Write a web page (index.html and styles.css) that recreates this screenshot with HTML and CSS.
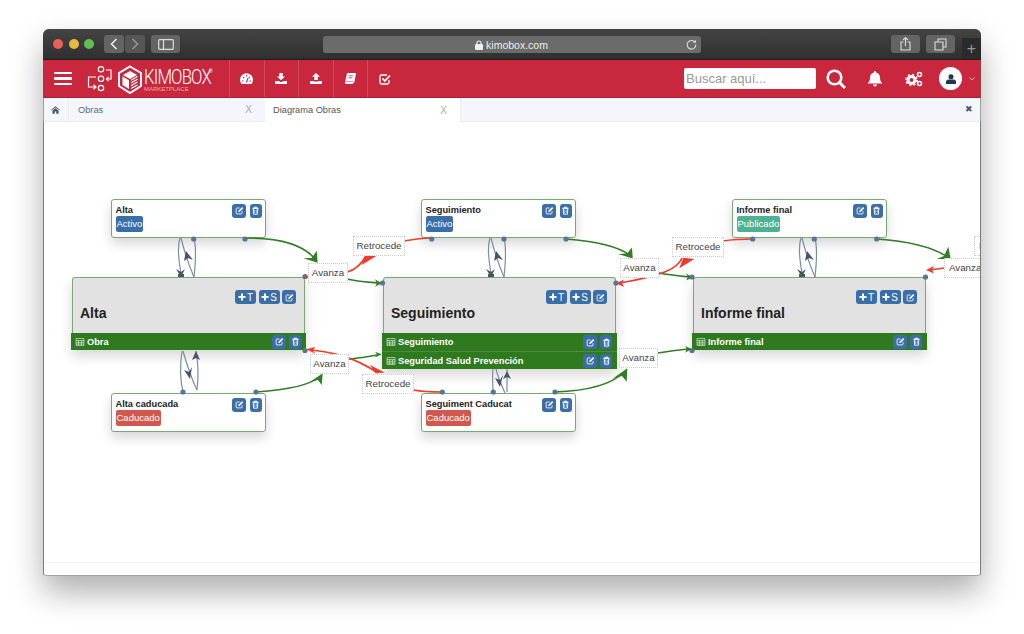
FILE: index.html
```html
<!DOCTYPE html>
<html lang="en">
<head>
<meta charset="UTF-8" />
<meta name="viewport" content="width=device-width, initial-scale=1" />
<title>Diagrama Obras</title>
<link rel="stylesheet" href="styles.css">
</head>
<body>
  <svg class="defs" width="0" height="0">
    <symbol id="i-edit" viewBox="0 0 16 16">
      <path d="M12.5 9v3.5a1.5 1.5 0 0 1-1.5 1.5H3.5A1.5 1.5 0 0 1 2 12.5V5a1.5 1.5 0 0 1 1.5-1.5H8" fill="none" stroke="currentColor" stroke-width="1.5"/>
      <path d="M6 8.5 12.7 1.8l2 2L8 10.5H6z" fill="currentColor"/>
    </symbol>
    <symbol id="i-trash" viewBox="0 0 16 16">
      <path d="M2.5 4h11M6 4V2h4v2M4 4l.5 10.5h7L12 4z" fill="none" stroke="currentColor" stroke-width="1.6"/>
      <path d="M6.5 6.500v6M9.500 6.500v6" stroke="currentColor"/>
    </symbol>
    <symbol id="i-plus" viewBox="0 0 16 16">
      <path d="M6 1h4v5h5v4h-5v5H6v-5H1V6h5z" fill="currentColor"/>
    </symbol>
    <symbol id="i-table" viewBox="0 0 16 14">
      <path d="M1 1h14v12H1zM1 4.500h14M1 7.500h14M1 10.500h14M5.500 4.500V13M10.500 4.500V13" fill="none" stroke="currentColor" stroke-width="1.200"/>
    </symbol>
    <g id="loop-a" fill="none" stroke="#7d8ca3" stroke-width="1.200">
      <path d="M180 238C176 250 180 265 181 274"/>
      <path d="M181 238C184 250 190 268 194 277"/>
      <path d="M194 238C197 250 195 268 194 277"/>
    </g>
    <g id="loop-heads" fill="#45546b">
      <path d="M181 277 176 269 181 272 185 269z"/>
      <path d="M186 251 193 260 188 258 184 261z"/>
      <rect x="178" y="274" width="6" height="3"/>
    </g>
  </svg>

  <div class="window">
    <div class="titlebar">
      <div class="lights"><i class="red"></i><i class="amber"></i><i class="green"></i></div>
      <div class="pager">
        <span class="tool"><svg width="8" height="12" viewBox="0 0 8 12"><path d="M6.500 1 1.500 6l5 5" fill="none" stroke="#eee" stroke-width="1.500"/></svg></span>
        <span class="tool dim"><svg width="8" height="12" viewBox="0 0 8 12"><path d="M1.500 1l5 5-5 5" fill="none" stroke="#999" stroke-width="1.500"/></svg></span>
      </div>
      <span class="tool wide side"><svg width="16" height="11" viewBox="0 0 16 11"><rect x=".7" y=".7" width="14.600" height="9.600" rx="1" fill="none" stroke="#ddd" stroke-width="1.200"/><path d="M5.500 1v9" stroke="#ddd" stroke-width="1.200"/></svg></span>
      <div class="urlbar">
        <span class="url"><svg width="8" height="10" viewBox="0 0 8 10"><rect y="4" width="8" height="6" rx="1" fill="#eee"/><path d="M2 4.500V3a2 2 0 0 1 4 0v1.500" fill="none" stroke="#eee" stroke-width="1.200"/></svg>kimobox.com</span>
        <svg class="reload" width="11" height="11" viewBox="0 0 12 12"><path d="M9.800 3.500A4.700 4.700 0 1 0 10.700 6" fill="none" stroke="#ddd" stroke-width="1.200"/><path d="M7.500 3.800 11 4.200 10.500.8z" fill="#ddd"/></svg>
      </div>
      <span class="tool wide"><svg width="11" height="14" viewBox="0 0 11 14"><path d="M3.500 5H1v8h9V5H7.500M5.500 9V1M3 3l2.500-2.300L8 3" fill="none" stroke="#ddd" stroke-width="1.100"/></svg></span>
      <span class="tool wide"><svg width="13" height="13" viewBox="0 0 13 13"><path d="M4 4V1h8v8H9M1 4h8v8H1z" fill="none" stroke="#ddd" stroke-width="1.100"/></svg></span>
      <span class="newtab">+</span>
    </div>

    <nav class="topnav">
      <div class="burger"><i></i><i></i><i></i></div>
      <div class="logo">
        <svg width="58" height="32" viewBox="0 0 58 32">
          <g fill="none" stroke="#fff" stroke-width="1.200">
            <circle cx="16" cy="5.300" r="2.700"/><circle cx="16" cy="14.800" r="2.700"/><circle cx="16" cy="24" r="2.700"/>
            <path d="M21 6h5v9h-4M23.500 12.800 21.500 15l2 2.200"/>
            <path d="M11 13H3.500v10H11M8.500 20.800 11 23l-2.500 2.200"/>
          </g>
          <path d="M45 2.500 56 9v13l-11 7-11-7V9z" fill="none" stroke="#fff" stroke-width="2"/>
          <path d="M45 7l7 4-7 4-7-4z" fill="#fff"/>
          <path d="M37.500 12.500 44 16.200V25l-6.500-4z" fill="#fff"/>
          <path d="M46 16.200l6.500-3.700M46 19l6.500-3.700M46 21.800l6.500-3.700M46 24.600l6.500-3.700" stroke="#fff" stroke-width="1.100"/>
        </svg>
        <div class="brand">
          <span class="brand-name">KIMOBOX</span><sup class="brand-reg">®</sup>
          <span class="brand-sub">MARKETPLACE</span>
        </div>
      </div>
      <ul class="shortcuts">
        <li><svg width="13" height="11" viewBox="0 0 13 11"><path d="M1.500 11A6.500 6.500 0 1 1 11.500 11z" fill="#fff"/><path d="M6.500 9.500 8 5M2 8h1.500M9.500 8H11M6.500 2v1.500M3.200 4l1 1M9.800 4l-1 1" stroke="#c8273d" stroke-width="1.100"/></svg></li>
        <li><svg width="12" height="11" viewBox="0 0 12 11"><path d="M4.300 0h3.400v3.500H10L6 7.300 2 3.500h2.300zM0 8h3.500L6 9.300 8.500 8H12v3H0z" fill="#fff"/></svg></li>
        <li><svg width="12" height="11" viewBox="0 0 12 11"><path d="M6 0l4 3.800H7.700V7H4.300V3.800H2zM0 8h3.500v.5h5V8H12v3H0z" fill="#fff"/></svg></li>
        <li><svg width="12" height="11" viewBox="0 0 12 11"><path d="M3 .5h8.500L9.800 9.500H1.200L1.500 10.500H9" fill="none" stroke="#fff"/><path d="M3 .5h8.500L9.800 8.500H1.200z" fill="#fff"/><path d="M4.800 2.800h4M4.400 4.800h4" stroke="#c8273d" stroke-width=".8"/></svg></li>
        <li><svg width="12" height="12" viewBox="0 0 12 12"><path d="M10 7v2.500A1.500 1.500 0 0 1 8.500 11h-6A1.500 1.500 0 0 1 1 9.500v-6A1.500 1.500 0 0 1 2.500 2H8" fill="none" stroke="#fff" stroke-width="1.300"/><path d="M3.500 5.500 5.800 8l5.200-5.500" fill="none" stroke="#fff" stroke-width="1.800"/></svg></li>
      </ul>
      <div class="nav-right">
        <input class="search" type="text" placeholder="Buscar aquí...">
        <svg class="search-icon" width="20" height="20" viewBox="0 0 20 20"><circle cx="8.500" cy="8.500" r="6.800" fill="none" stroke="#fff" stroke-width="2.600"/><path d="M13.500 13.500 19 19" stroke="#fff" stroke-width="3"/></svg>
        <svg class="bell" width="16" height="16" viewBox="0 0 16 16"><path d="M8 0a1.300 1.300 0 0 1 1.200 1.500C11.500 2 13 4 13 6.500c0 3 .8 4.500 2.500 6H.5C2.200 11 3 9.500 3 6.500 3 4 4.500 2 6.800 1.500A1.300 1.300 0 0 1 8 0zM6 13.500h4a2 2 0 0 1-4 0z" fill="#fff"/></svg>
        <svg class="cogs" width="18" height="16" viewBox="0 0 18 16"><circle cx="6.500" cy="9" r="3.500" fill="none" stroke="#fff" stroke-width="3"/><circle cx="6.500" cy="9" r="5.600" fill="none" stroke="#fff" stroke-width="1.500" stroke-dasharray="2 2.400"/><circle cx="14.500" cy="3.500" r="2" fill="none" stroke="#fff" stroke-width="1.500"/><circle cx="14.500" cy="12.500" r="2" fill="none" stroke="#fff" stroke-width="1.500"/></svg>
        <span class="avatar"><svg width="10" height="10" viewBox="0 0 10 10"><circle cx="5" cy="2.700" r="2.500" fill="#1f3555"/><path d="M0 10V8a2.500 2.500 0 0 1 2.500-2.500h5A2.500 2.500 0 0 1 10 8v2z" fill="#1f3555"/></svg></span>
        <svg class="caret" width="6" height="4" viewBox="0 0 6 4"><path d="M.5.500 3 3 5.500.5" fill="none" stroke="#eebcc3"/></svg>
      </div>
    </nav>

    <div class="tabs">
      <span class="tab-home"><svg width="9" height="8" viewBox="0 0 12 10"><path d="M6 0l6 5-.8.8L6 1.500.8 5.800 0 5zM2 6l4-3.300L10 6v4H7V7H5v3H2z" fill="#44566f"/></svg></span>
      <span class="tab"><span>Obras</span><b>X</b></span>
      <span class="tab active"><span>Diagrama Obras</span><b>X</b></span>
      <span class="tab-close">✖</span>
    </div>

    <main class="canvas">
      <div class="node small n1">
        <div class="small-body"><strong>Alta</strong><span class="badge blue">Activo</span></div>
        <div class="btns top">
          <span class="btn"><svg><use href="#i-edit"/></svg></span><span class="btn thin"><svg><use href="#i-trash"/></svg></span>
        </div>
      </div>
      <div class="node small n2">
        <div class="small-body"><strong>Seguimiento</strong><span class="badge blue">Activo</span></div>
        <div class="btns top">
          <span class="btn"><svg><use href="#i-edit"/></svg></span><span class="btn thin"><svg><use href="#i-trash"/></svg></span>
        </div>
      </div>
      <div class="node small n3">
        <div class="small-body"><strong>Informe final</strong><span class="badge teal">Publicado</span></div>
        <div class="btns top">
          <span class="btn"><svg><use href="#i-edit"/></svg></span><span class="btn thin"><svg><use href="#i-trash"/></svg></span>
        </div>
      </div>
      <div class="node small n4">
        <div class="small-body"><strong>Alta caducada</strong><span class="badge red">Caducado</span></div>
        <div class="btns top">
          <span class="btn"><svg><use href="#i-edit"/></svg></span><span class="btn thin"><svg><use href="#i-trash"/></svg></span>
        </div>
      </div>
      <div class="node small n5">
        <div class="small-body"><strong>Seguiment Caducat</strong><span class="badge red">Caducado</span></div>
        <div class="btns top">
          <span class="btn"><svg><use href="#i-edit"/></svg></span><span class="btn thin"><svg><use href="#i-trash"/></svg></span>
        </div>
      </div>

      <div class="node big b1">
        <div class="big-head">
          <div class="btns head-btns">
            <span class="btn txt"><svg><use href="#i-plus"/></svg>T</span><span class="btn txt"><svg><use href="#i-plus"/></svg>S</span><span class="btn"><svg><use href="#i-edit"/></svg></span>
          </div>
          <h2>Alta</h2>
        </div>
        <div class="row solo"><svg class="tbl"><use href="#i-table"/></svg><span>Obra</span><span class="btns"><span class="btn"><svg><use href="#i-edit"/></svg></span><span class="btn thin"><svg><use href="#i-trash"/></svg></span></span></div>
      </div>
      <div class="node big b2">
        <div class="big-head">
          <div class="btns head-btns">
            <span class="btn txt"><svg><use href="#i-plus"/></svg>T</span><span class="btn txt"><svg><use href="#i-plus"/></svg>S</span><span class="btn"><svg><use href="#i-edit"/></svg></span>
          </div>
          <h2>Seguimiento</h2>
        </div>
        <div class="row"><svg class="tbl"><use href="#i-table"/></svg><span>Seguimiento</span><span class="btns"><span class="btn"><svg><use href="#i-edit"/></svg></span><span class="btn thin"><svg><use href="#i-trash"/></svg></span></span></div>
        <div class="row"><svg class="tbl"><use href="#i-table"/></svg><span>Seguridad Salud Prevención</span><span class="btns"><span class="btn"><svg><use href="#i-edit"/></svg></span><span class="btn thin"><svg><use href="#i-trash"/></svg></span></span></div>
      </div>
      <div class="node big b3">
        <div class="big-head">
          <div class="btns head-btns">
            <span class="btn txt"><svg><use href="#i-plus"/></svg>T</span><span class="btn txt"><svg><use href="#i-plus"/></svg>S</span><span class="btn"><svg><use href="#i-edit"/></svg></span>
          </div>
          <h2>Informe final</h2>
        </div>
        <div class="row solo"><svg class="tbl"><use href="#i-table"/></svg><span>Informe final</span><span class="btns"><span class="btn"><svg><use href="#i-edit"/></svg></span><span class="btn thin"><svg><use href="#i-trash"/></svg></span></span></div>
      </div>

      <!-- edges, viewBox is in page coordinates -->
      <svg class="edges" width="938" height="454" viewBox="43 122 938 454">
        <use href="#loop-a"/><use href="#loop-heads"/>
        <use href="#loop-a" x="310"/><use href="#loop-heads" x="310"/>
        <use href="#loop-a" x="621"/><use href="#loop-heads" x="621"/>

        <g fill="none" stroke="#7d8ca3" stroke-width="1.200">
          <path d="M182 351C180 365 180 380 183 392"/>
          <path d="M183 351C187 365 192 380 197 390"/>
          <path d="M196 351C199 368 198 382 197 390"/>
          <path d="M493 369C492 378 493 385 493 392M496 369C498 378 502 386 505 393M507 369V392"/>
        </g>
        <g fill="#45546b">
          <path d="M196 351 200 360 196 358 192 360z"/>
          <path d="M190 379 184 370 189 372 192 367z"/>
          <path d="M500 387 495 378 500 380 503 375z"/>
          <path d="M507 371 511 379 507 377 503 379z"/>
        </g>

        <g fill="none" stroke="#2f7d25" stroke-width="1.600">
          <path d="M245 238C280 238 303 245 314 258"/>
          <path d="M347 279C360 282 368 282 378 283"/>
          <path d="M256 392C285 390 310 385 319 377"/>
          <path d="M349 359C360 358 370 356 378 355"/>
          <path d="M566 239C595 241 620 247 629 255"/>
          <path d="M659 273C670 275 680 276 689 277"/>
          <path d="M555 392C585 391 610 386 624 372"/>
          <path d="M658 353C670 351 678 350 688 349"/>
          <path d="M877 239C905 241 930 246 946 256"/>
        </g>
        <g fill="#2f7d25">
          <path d="M317.700 262.700 303.300 258.300 311.700 258 316.700 250.700z"/>
          <path d="M381.700 283.300 375 279.300 377 283.300 375 286.700z"/>
          <path d="M322.700 373.300 310 382 318 380 321.700 385z"/>
          <path d="M381.700 354.300 375 351.700 377 354.300 375 357.500z"/>
          <path d="M632.700 258.500 618 254 627 253.500 632 247.500z"/>
          <path d="M692.700 277.300 686 273.500 688 277 686 280.500z"/>
          <path d="M627.300 368.300 613.300 378.300 622 376 626.700 381.700z"/>
          <path d="M691.700 349 685 346 687 349 685 352.700z"/>
          <path d="M950.700 259 936.700 259 944 256 948.300 246.700z"/>
        </g>

        <g fill="none" stroke="#ee3b2b" stroke-width="1.600">
          <path d="M347 272C356 270 362 263 366 256"/>
          <path d="M404 241C415 239 423 238 432 238"/>
          <path d="M310 350C335 352 355 358 378 373"/>
          <path d="M413 390C425 392 433 392 442 392"/>
          <path d="M682 258C678 268 665 275 620 283"/>
          <path d="M723 241C735 239 743 239 753 239"/>
          <path d="M944 268C938 269 935 269 930 270"/>
        </g>
        <g fill="#ee3b2b">
          <path d="M361.700 265 365 256 376.700 255.700z"/>
          <path d="M370 365 375 373 385 372.700z"/>
          <path d="M679.300 268.300 683.300 257.700 694.300 259z"/>
          <path d="M306 349.300 315 347 313 351 316 354z"/>
          <path d="M616 283.300 624 279.500 622 283 624 287z"/>
          <path d="M926 270 934 266 932 270 934 273.500z"/>
        </g>

        <g fill="#567691">
          <circle cx="193.700" cy="239" r="2.600"/><circle cx="245" cy="239" r="2.600"/>
          <circle cx="431.700" cy="239" r="2.600"/><circle cx="504" cy="239" r="2.600"/><circle cx="566" cy="239" r="2.600"/>
          <circle cx="752.700" cy="239" r="2.600"/><circle cx="814.300" cy="239" r="2.600"/><circle cx="876.700" cy="239" r="2.600"/>
          <circle cx="183" cy="392" r="2.600"/><circle cx="256" cy="392" r="2.600"/>
          <circle cx="442.300" cy="392" r="2.600"/><circle cx="493.300" cy="392" r="2.600"/><circle cx="555" cy="392" r="2.600"/>
          <circle cx="305" cy="276.500" r="2.600"/><circle cx="305" cy="350.500" r="2.600"/>
          <circle cx="382.500" cy="283" r="2.600"/><circle cx="616" cy="283" r="2.600"/>
          <circle cx="692" cy="277" r="2.600"/><circle cx="925.500" cy="277" r="2.600"/><circle cx="692" cy="350.500" r="2.600"/>
        </g>
        <circle cx="306.500" cy="277" r="1.500" fill="#ee3b2b"/>
      </svg>

      <span class="edge-label l1">Avanza</span>
      <span class="edge-label l2">Avanza</span>
      <span class="edge-label l3">Avanza</span>
      <span class="edge-label l4">Avanza</span>
      <span class="edge-label l5">Avanza</span>
      <span class="edge-label l6">Retrocede</span>
      <span class="edge-label l7">Retrocede</span>
      <span class="edge-label l8">Retrocede</span>
      <span class="edge-label l9">Retrocede</span>

      <div class="foot"></div>
    </main>
  </div>
</body>
</html>
```

FILE: styles.css
```css
/* Reset & base */
* {
  box-sizing: border-box;
}
html, body {
  height: 100%;
}
body {
  margin: 0;
  background: #fff;
  overflow: hidden;
  font-family: 'Liberation Sans', Arial, sans-serif;
  color: #222;
}
.defs {
  display: block;
  height: 0;
}

.window {
  display: flex;
  flex-direction: column;
  width: 938px;
  height: 547px;
  margin: 29px 0 0 43px;
  border-radius: 6px 6px 3px 3px;
  overflow: hidden;
  background: #fff;
  outline: 1px solid rgba(90, 90, 90, 0.55);
  outline-offset: -1px;
  box-shadow: 0 16px 32px rgba(0, 0, 0, 0.32);
}

/* Browser chrome */
.titlebar {
  display: flex;
  align-items: flex-start;
  height: 31px;
  padding-top: 6px;
  background: linear-gradient(#444, #2f2f2f);
  border-bottom: 1px solid #1f1f1f;
  flex: none;
  position: relative;
}
.lights {
  display: flex;
  gap: 5.500px;
  margin: 4px 0 0 10px;
}
.lights i {
  width: 10px;
  height: 10px;
  border-radius: 50%;
}
.lights .red { background: #ec5f57; }
.lights .amber { background: #e2b93f; }
.lights .green { background: #5fc04f; }
.tool {
  display: flex;
  align-items: center;
  justify-content: center;
  width: 20px;
  height: 18px;
  background: #646464;
  border-radius: 3px;
}
.tool.dim {
  background: #565656;
}
.tool.wide {
  width: 29px;
  margin-right: 6.500px;
}
.pager {
  display: flex;
  gap: 1px;
  margin-left: 10px;
}
.side {
  margin-left: 6px;
}
.urlbar {
  position: relative;
  display: flex;
  align-items: center;
  justify-content: center;
  width: 378px;
  height: 17px;
  margin: 1px 190px 0 136px;
  background: #6b6b6b;
  border-radius: 3px;
  font-size: 10.500px;
  color: #eee;
}
.url {
  display: flex;
  align-items: center;
  gap: 3px;
}
.reload {
  position: absolute;
  right: 4px;
  top: 3px;
}
.newtab {
  position: absolute;
  right: 0;
  bottom: 0;
  width: 19px;
  height: 21px;
  background: #2b2b2b;
  color: #999;
  font-size: 16px;
  line-height: 21px;
  text-align: center;
}

/* Red app bar */
.topnav {
  display: flex;
  align-items: center;
  height: 38px;
  flex: none;
  padding-left: 11px;
  background: #c8273d;
  border-bottom: 1px solid #a91f33;
}
.burger {
  display: flex;
  flex-direction: column;
  gap: 3px;
  width: 18px;
}
.burger i {
  height: 2.600px;
  background: #fff;
  border-radius: 1px;
}
.logo {
  display: flex;
  align-items: center;
  width: 144px;
  margin-left: 13px;
  padding-top: 2px;
}
.brand {
  position: relative;
  display: flex;
  flex-direction: column;
  width: 70px;
  margin-left: 1px;
  color: #fff;
}
.brand-name {
  font-family: Roboto, sans-serif;
  font-weight: 300;
  font-size: 20px;
  line-height: 18px;
  letter-spacing: -1px;
  white-space: nowrap;
  transform: scaleX(0.84);
  transform-origin: left;
}
.brand-reg {
  position: absolute;
  left: 65px;
  top: 0;
  font-size: 5px;
  line-height: 6px;
}
.brand-sub {
  font-size: 6px;
  line-height: 6px;
  white-space: nowrap;
  color: #eaa8b2;
}
.shortcuts {
  display: flex;
  height: 100%;
  margin: 0;
  padding: 0;
  list-style: none;
}
.shortcuts li {
  display: flex;
  align-items: center;
  justify-content: center;
  width: 34.500px;
  border-left: 1px solid #d2495c;
}
.nav-right {
  display: flex;
  align-items: center;
  margin-left: auto;
  padding-right: 6px;
}
.search {
  width: 132px;
  height: 21px;
  padding: 0 2px;
  border: 0;
  border-radius: 2px;
  font: 13px 'Liberation Sans', Arial, sans-serif;
}
.search::placeholder {
  color: #999;
}
.search-icon { margin-left: 10px; }
.bell { margin-left: 21px; }
.cogs { margin-left: 22px; }
.avatar {
  display: flex;
  align-items: center;
  justify-content: center;
  width: 23px;
  height: 23px;
  margin-left: 16px;
  border-radius: 50%;
  background: #fff;
}
.caret { margin-left: 7px; }

/* Tabs */
.tabs {
  display: flex;
  height: 24px;
  flex: none;
  background: #f4f6fb;
  border-bottom: 1px solid #e9ebf0;
  font-size: 9.250px;
  color: #5b6b80;
}
.tab-home {
  display: flex;
  align-items: center;
  justify-content: center;
  width: 26px;
  border-right: 1px solid #e9ebf0;
}
.tab {
  display: flex;
  align-items: center;
  justify-content: space-between;
  width: 196px;
  padding: 0 13px 0 9px;
}
.tab b {
  font-weight: 400;
  color: #aaa;
  font-size: 10px;
}
.tab.active {
  height: 24px;
  padding-left: 8px;
  background: #fff;
  border-right: 1px solid #e9ebf0;
  color: #555;
}
.tab-close {
  margin-left: auto;
  padding-right: 8px;
  line-height: 23px;
  font-size: 9px;
  color: #44566f;
}

/* Diagram canvas */
.canvas {
  position: relative;
  flex: 1;
  overflow: hidden;
  border: solid rgba(90, 90, 90, 0.55);
  border-width: 0 1px;
}
.edges {
  position: absolute;
  left: -1px;
  top: 0;
}
.foot {
  position: absolute;
  left: 0;
  right: 0;
  top: 440px;
  border-top: 1px solid #f3f3f3;
}

.node {
  position: absolute;
  box-shadow: 0 6px 12px rgba(0, 0, 0, 0.16);
}
.small {
  display: flex;
  justify-content: space-between;
  width: 155px;
  height: 39px;
  padding: 3.500px 3.500px 0 3.500px;
  background: #fff;
  border: 1.500px solid #7aa874;
  border-radius: 3px;
}
.small-body {
  display: flex;
  flex-direction: column;
  align-items: flex-start;
}
.small-body strong {
  font-size: 9.250px;
  line-height: 12px;
}
.n1 { left: 67px; top: 77px; }
.n2 { left: 377px; top: 77px; }
.n3 { left: 688px; top: 77px; }
.n4 { left: 67px; top: 271px; }
.n5 { left: 377px; top: 271px; }

.badge {
  padding: 0 1px;
  height: 16px;
  border-radius: 2px;
  font-size: 9.500px;
  line-height: 15px;
  color: #fff;
}
.badge.blue { background: #3a6ea8; }
.badge.red { background: #d2574f; }
.badge.teal { background: #4fb194; }

.btns {
  display: flex;
  gap: 3.500px;
  flex: none;
}
.btn {
  display: flex;
  align-items: center;
  justify-content: center;
  width: 14px;
  height: 14px;
  background: #3a6ea8;
  border-radius: 3px;
  color: #fff;
  font-size: 10px;
}
.btn.thin {
  width: 12px;
}
.btn svg {
  width: 9px;
  height: 9px;
}
.btn.txt {
  width: 21px;
  gap: 1px;
}
.btn.txt svg {
  width: 8px;
  height: 8px;
}

.big {
  width: 233px;
}
.big-head {
  height: 56px;
  padding: 12px 8px 0 7px;
  background: #e2e2e2;
  border: 1.500px solid #7aa874;
  border-bottom: 0;
  border-radius: 3px 3px 0 0;
}
.head-btns {
  justify-content: flex-end;
  gap: 2.500px;
}
.big-head h2 {
  margin: 0;
  font-size: 14px;
  line-height: 18px;
  color: #222;
}
.row {
  display: flex;
  align-items: center;
  height: 18px;
  margin: 0 -1px;
  padding: 0 5px 0 4px;
  background: #2f7a1f;
  color: #fff;
  font-weight: 700;
  font-size: 9.250px;
}
.row.solo {
  height: 17px;
}
.row + .row {
  border-top: 1px solid #4c8c3e;
}
.row .btns {
  margin-left: auto;
  gap: 3px;
}
.tbl {
  width: 10px;
  height: 8px;
  margin-right: 2px;
  color: #dbe8d6;
}
.b1 { left: 28px; top: 155px; }
.b2 { left: 339px; top: 155px; }
.b3 { left: 649px; top: 155px; }

.edge-label {
  position: absolute;
  height: 20px;
  background: #fff;
  border: 1px dotted #ccc;
  font-size: 9.750px;
  line-height: 18px;
  text-align: center;
  color: #444;
}
.l1 { left: 264px; top: 141px; width: 40px; }
.l2 { left: 266px; top: 232px; width: 39px; }
.l3 { left: 576px; top: 136px; width: 39px; }
.l4 { left: 575px; top: 226px; width: 39px; }
.l5 { left: 900px; top: 136px; width: 50px; text-align: left; padding-left: 4px; }
.l6 { left: 309px; top: 114px; width: 52px; }
.l7 { left: 318px; top: 252px; width: 52px; }
.l8 { left: 628px; top: 115px; width: 52px; }
.l9 { left: 930px; top: 114px; width: 52px; text-align: left; padding-left: 4px; }
```
